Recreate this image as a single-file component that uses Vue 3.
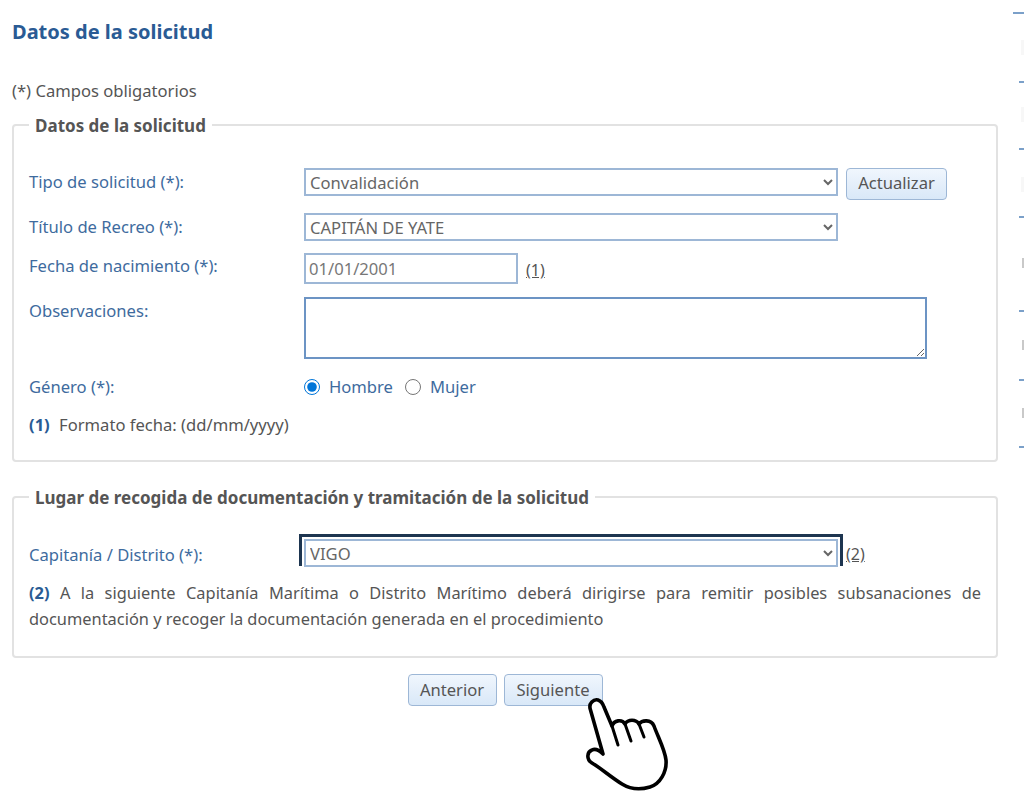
<template>
  <div class="page">
    <h2 class="title">Datos de la solicitud</h2>
    <p class="note">(*) Campos obligatorios</p>

    <fieldset class="box first">
      <legend>Datos de la solicitud</legend>
      <div class="row tipo">
        <label>Tipo de solicitud (*):</label>
        <select class="field">
          <option>Convalidación</option>
        </select>
        <button class="btn update" type="button">Actualizar</button>
      </div>
      <div class="row titulo">
        <label>Título de Recreo (*):</label>
        <select class="field">
          <option>CAPITÁN DE YATE</option>
        </select>
      </div>
      <div class="row fecha">
        <label>Fecha de nacimiento (*):</label>
        <input class="date" type="text" value="01/01/2001" />
        <span class="ref">(1)</span>
      </div>
      <div class="row obs">
        <label>Observaciones:</label>
        <textarea class="area"></textarea>
      </div>
      <div class="row genero">
        <label>Género (*):</label>
        <input id="h" type="radio" name="genero" checked />
        <label class="opt" for="h">Hombre</label>
        <input id="m" type="radio" name="genero" />
        <label class="opt" for="m">Mujer</label>
      </div>
      <p class="hint"><b>(1)</b> Formato fecha: (dd/mm/yyyy)</p>
    </fieldset>

    <fieldset class="box second">
      <legend>Lugar de recogida de documentación y tramitación de la solicitud</legend>
      <div class="row distrito">
        <label>Capitanía / Distrito (*):</label>
        <div class="focus">
          <select class="field">
            <option>VIGO</option>
          </select>
        </div>
        <span class="ref">(2)</span>
      </div>
      <p class="info">
        <b>(2)</b> A la siguiente Capitanía Marítima o Distrito Marítimo deberá dirigirse para remitir posibles subsanaciones de documentación y recoger la documentación generada en el procedimiento
      </p>
    </fieldset>

    <div class="actions">
      <button class="btn prev" type="button">Anterior</button>
      <button class="btn next" type="button">Siguiente</button>
    </div>

    <!-- mano sobre el boton -->
    <svg class="hand" viewBox="580 690 100 110" width="100" height="110">
      <path
        d="M590.5 710 C588 703 594 699 598 700 C601 701 603 704 604 707 L612 726 C614 720 622 719 625 724 C628 719 636 719 639 724 C642 720 651 719 654 726 C658 737 665 750 666 760 C667 772 660 784 650 787 C640 790 630 789 622 784 C612 778 602 769 592 763 C586 759 587 752 592 750 C596 748 600 751 603 754 Z"
        fill="#fff"
        stroke="#000"
        stroke-width="3.6"
        stroke-linejoin="round"
      />
      <path d="M612 726 L618 745 M625 724 L631 741 M639 724 L644 737" fill="none" stroke="#000" stroke-width="3" stroke-linecap="round" />
    </svg>

    <!-- resto de la columna derecha, cortada -->
    <div class="sliver">
      <i v-for="d in dashes" :key="d.y" :class="d.cls" :style="{ top: d.y + 'px' }"></i>
    </div>
  </div>
</template>

<script setup>
const dashes = [
  { y: 12, cls: 'dash long' },
  { y: 40, cls: 'ghost' },
  { y: 81, cls: 'dash' },
  { y: 107, cls: 'ghost' },
  { y: 148, cls: 'dash' },
  { y: 177, cls: 'ghost' },
  { y: 216, cls: 'dash' },
  { y: 258, cls: 'ghost dark' },
  { y: 310, cls: 'dash' },
  { y: 340, cls: 'ghost dark' },
  { y: 379, cls: 'dash' },
  { y: 408, cls: 'ghost dark' },
  { y: 446, cls: 'dash' }
]
</script>

<style>
html, body {
  background: #fff;
}
</style>

<style scoped>
.page {
  position: relative;
  width: 1024px;
  height: 801px;
  overflow: hidden;
  box-sizing: border-box;
  padding: 20px 26px 0 12px;
  font-family: "Noto Sans", "Open Sans", sans-serif;
  font-size: 16.6px;
  color: #555;
  background: #fff;
}

.title {
  margin: 0;
  font-size: 20px;
  line-height: 24px;
  font-weight: 700;
  color: #2a5b94;
}

.note {
  margin: 35px 0 0;
  line-height: 24px;
}

.box {
  margin: 0;
  padding: 0 15px;
  border: 2px solid #e2e2e2;
  border-radius: 4px;
  min-width: 0;
}

.first {
  height: 350px;
  box-sizing: border-box;
  margin-top: 9px;
}

.second {
  height: 174px;
  box-sizing: border-box;
  margin-top: 22px;
}

legend {
  margin-left: 0;
  padding: 3px 6px 0;
  font-weight: 700;
  font-size: 17px;
  line-height: 22px;
}

.row {
  display: flex;
  align-items: flex-start;
}

.row > label:first-child {
  width: 275px;
  flex: none;
  color: #3e6b9e;
  line-height: 24px;
  padding-top: 2px;
}

.field {
  width: 534px;
  height: 28px;
  box-sizing: border-box;
  padding: 0;
  border: 2px solid #9db7d6;
  border-radius: 0;
  background: #fff;
  color: #666;
  font: inherit;
}

.tipo {
  margin-top: 31px;
}

.titulo {
  margin-top: 13px;
}

.fecha {
  margin-top: 12px;
}

.fecha > label:first-child {
  padding-top: 1px;
}

.obs {
  margin-top: 13px;
}

.genero {
  margin-top: 16px;
  align-items: center;
}

.genero > label:first-child {
  padding-top: 0;
}

.date {
  width: 214px;
  height: 31px;
  box-sizing: border-box;
  padding: 0 3px;
  border: 2px solid #9db7d6;
  color: #777;
  font: inherit;
  outline: none;
}

.ref {
  margin-left: 8px;
  margin-top: 6px;
  text-decoration: underline;
  color: #555;
  font-size: 16px;
}

.area {
  width: 623px;
  height: 62px;
  box-sizing: border-box;
  border: 2px solid #6c94c4;
  outline: none;
  margin: 0;
  display: block;
}

input[type="radio"] {
  width: 16px;
  height: 16px;
  margin: 0;
  accent-color: #0075d8;
}

.opt {
  margin: 0 12px 0 9px;
  color: #3e6b9e;
  line-height: 24px;
}

.hint {
  margin: 14px 0 0;
  line-height: 24px;
}

.hint b,
.info b {
  color: #2a5b94;
}

.hint b {
  margin-right: 5px;
}

.distrito {
  margin-top: 25px;
}

.row.distrito > label:first-child {
  width: 270px;
  padding-top: 9px;
}

.focus {
  padding: 2px 2px 0;
  height: 32px;
  box-sizing: border-box;
  border: 3px solid #1d3550;
  border-bottom: 0;
}

.distrito .ref {
  margin-left: 3px;
  margin-top: 9px;
}

.info {
  margin: 13px 0 0;
  font-size: 16.4px;
  line-height: 26px;
  text-align: justify;
  width: 952px;
}

.actions {
  display: flex;
  justify-content: center;
  gap: 7px;
  margin-top: 16px;
}

.btn {
  height: 32px;
  padding: 0 0 2px;
  border: 1px solid #9db7d6;
  border-radius: 4px;
  background: linear-gradient(#f0f6fd, #d9e8f8);
  color: #555;
  font: inherit;
}

.prev {
  width: 89px;
}

.next {
  width: 99px;
}

.update {
  width: 101px;
  margin-left: 8px;
  padding-bottom: 3px;
}

.hand {
  position: absolute;
  left: 580px;
  top: 690px;
}

.sliver {
  position: absolute;
  top: 0;
  right: 0;
  width: 11px;
  height: 460px;
}

.sliver i {
  position: absolute;
  right: 0;
  display: block;
}

.dash {
  width: 5px;
  height: 2px;
  background: #7ba0c9;
}

.long {
  width: 11px;
}

.ghost {
  width: 3px;
  height: 15px;
  background: #f7f7f7;
}

.dark {
  width: 2px;
  background: #c9c9c9;
  height: 10px;
}
</style>
